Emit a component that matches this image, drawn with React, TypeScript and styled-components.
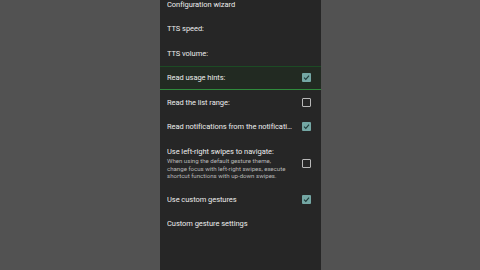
import React from "react";
import styled, { createGlobalStyle } from "styled-components";

const GlobalStyle = createGlobalStyle`
  html, body {
    margin: 0;
    padding: 0;
    background: #525252;
  }
  #root {
    height: 270px;
  }
`;

type Item = {
  title: string;
  desc?: string[];
  check?: "on" | "off";
  active?: boolean;
};

const items: Item[] = [
  { title: "Configuration wizard" },
  { title: "TTS speed:" },
  { title: "TTS volume:" },
  { title: "Read usage hints:", check: "on", active: true },
  { title: "Read the list range:", check: "off" },
  { title: "Read notifications from the notification bar:", check: "on" },
  {
    title: "Use left-right swipes to navigate:",
    desc: [
      "When using the default gesture theme,",
      "change focus with left-right swipes, execute",
      "shortcut functions with up-down swipes.",
    ],
    check: "off",
  },
  { title: "Use custom gestures", check: "on" },
  { title: "Custom gesture settings" },
];

const CheckBox: React.FC<{ checked: boolean }> = ({ checked }) => (
  <Box checked={checked}>
    {checked && (
      <svg width="7" height="7" viewBox="0 0 10 10">
        <path
          d="M1.5 5.2 L4 7.6 L8.6 2.4"
          fill="none"
          stroke="#1f3b3a"
          strokeWidth="1.6"
        />
      </svg>
    )}
  </Box>
);

export default function App() {
  return (
    <>
      <GlobalStyle />
      <Page>
        <Panel>
          <List>
            {items.map((it) => (
              <Row key={it.title} active={!!it.active} tall={!!it.desc}>
                <Texts>
                  <Title>{it.title}</Title>
                  {it.desc && (
                    <Desc>
                      {it.desc.map((line) => (
                        <div key={line}>{line}</div>
                      ))}
                    </Desc>
                  )}
                </Texts>
                {it.check && <CheckBox checked={it.check === "on"} />}
              </Row>
            ))}
          </List>
        </Panel>
      </Page>
    </>
  );
}

const Page = styled.div`
  height: 270px;
  display: flex;
  justify-content: center;
  background: #525252;
`;

const Panel = styled.div`
  width: 161px;
  margin-left: 1px;
  height: 270px;
  overflow: hidden;
  background: #262626;
  font-family: Roboto, "Liberation Sans", sans-serif;
`;

const List = styled.div`
  margin-top: -8px;
  display: flex;
  flex-direction: column;
`;

const Row = styled.div<{ active: boolean; tall: boolean }>`
  box-sizing: border-box;
  height: ${({ tall }) => (tall ? "48px" : "24.5px")};
  display: flex;
  align-items: center;
  justify-content: space-between;
  padding: ${({ tall }) => (tall ? "8px 10px 8px 7px" : "0 10px 0 7px")};
  background: ${({ active }) => (active ? "#222a22" : "transparent")};
  border-top: 1px solid ${({ active }) => (active ? "#1c4a24" : "transparent")};
  border-bottom: 1px solid
    ${({ active }) => (active ? "#2f8a3c" : "transparent")};
`;

const Texts = styled.div`
  display: flex;
  flex-direction: column;
  min-width: 0;
  flex: 1;
  padding-right: 6px;
`;

const Title = styled.div`
  font-size: 7.5px;
  line-height: 9px;
  letter-spacing: -0.05px;
  color: #ececec;
  white-space: nowrap;
  overflow: hidden;
  text-overflow: ellipsis;
`;

const Desc = styled.div`
  font-size: 6.1px;
  line-height: 7.5px;
  color: #b8b8b8;
  margin-top: 1.5px;
  white-space: nowrap;
`;

const Box = styled.div<{ checked: boolean }>`
  box-sizing: border-box;
  flex: none;
  width: 9px;
  height: 9px;
  border-radius: 1px;
  display: flex;
  align-items: center;
  justify-content: center;
  background: ${({ checked }) => (checked ? "#74a7a4" : "transparent")};
  border: ${({ checked }) => (checked ? "none" : "1.3px solid #b8b8b8")};
`;
